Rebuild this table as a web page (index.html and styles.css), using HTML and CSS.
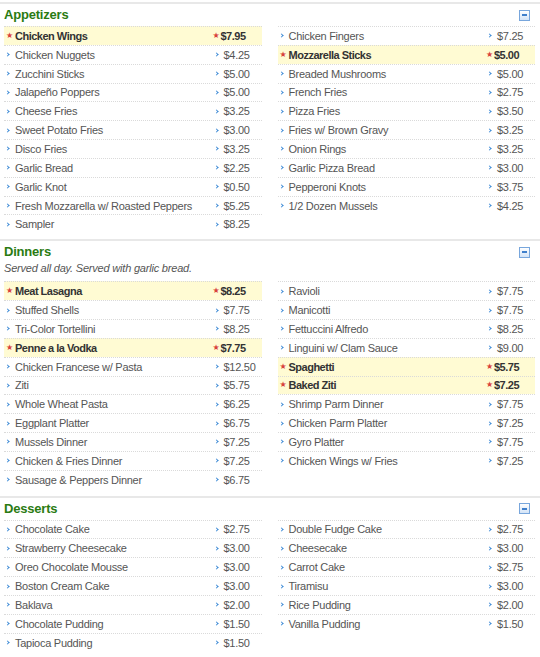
FILE: index.html
```html
<!DOCTYPE html>
<html>
<head>
<meta charset="utf-8">
<link rel="stylesheet" href="styles.css">
</head>
<body>
<div class="menu">
  <section class="section">
    <div class="sec-head"><h2>Appetizers</h2><span class="toggle"></span></div>
    <div class="cols">
      <ul class="col">
        <li class="row hot"><span class="name">Chicken Wings</span><span class="price">$7.95</span></li>
        <li class="row"><span class="name">Chicken Nuggets</span><span class="price">$4.25</span></li>
        <li class="row"><span class="name">Zucchini Sticks</span><span class="price">$5.00</span></li>
        <li class="row"><span class="name">Jalapeño Poppers</span><span class="price">$5.00</span></li>
        <li class="row"><span class="name">Cheese Fries</span><span class="price">$3.25</span></li>
        <li class="row"><span class="name">Sweet Potato Fries</span><span class="price">$3.00</span></li>
        <li class="row"><span class="name">Disco Fries</span><span class="price">$3.25</span></li>
        <li class="row"><span class="name">Garlic Bread</span><span class="price">$2.25</span></li>
        <li class="row"><span class="name">Garlic Knot</span><span class="price">$0.50</span></li>
        <li class="row"><span class="name">Fresh Mozzarella w/ Roasted Peppers</span><span class="price">$5.25</span></li>
        <li class="row"><span class="name">Sampler</span><span class="price">$8.25</span></li>
      </ul>
      <ul class="col">
        <li class="row"><span class="name">Chicken Fingers</span><span class="price">$7.25</span></li>
        <li class="row hot"><span class="name">Mozzarella Sticks</span><span class="price">$5.00</span></li>
        <li class="row"><span class="name">Breaded Mushrooms</span><span class="price">$5.00</span></li>
        <li class="row"><span class="name">French Fries</span><span class="price">$2.75</span></li>
        <li class="row"><span class="name">Pizza Fries</span><span class="price">$3.50</span></li>
        <li class="row"><span class="name">Fries w/ Brown Gravy</span><span class="price">$3.25</span></li>
        <li class="row"><span class="name">Onion Rings</span><span class="price">$3.25</span></li>
        <li class="row"><span class="name">Garlic Pizza Bread</span><span class="price">$3.00</span></li>
        <li class="row"><span class="name">Pepperoni Knots</span><span class="price">$3.75</span></li>
        <li class="row"><span class="name">1/2 Dozen Mussels</span><span class="price">$4.25</span></li>
      </ul>
    </div>
  </section>

  <section class="section section-loose">
    <div class="sec-head"><h2>Dinners</h2><span class="toggle"></span></div>
    <p class="desc">Served all day. Served with garlic bread.</p>
    <div class="cols">
      <ul class="col">
        <li class="row hot"><span class="name">Meat Lasagna</span><span class="price">$8.25</span></li>
        <li class="row"><span class="name">Stuffed Shells</span><span class="price">$7.75</span></li>
        <li class="row"><span class="name">Tri-Color Tortellini</span><span class="price">$8.25</span></li>
        <li class="row hot"><span class="name">Penne a la Vodka</span><span class="price">$7.75</span></li>
        <li class="row"><span class="name">Chicken Francese w/ Pasta</span><span class="price">$12.50</span></li>
        <li class="row"><span class="name">Ziti</span><span class="price">$5.75</span></li>
        <li class="row"><span class="name">Whole Wheat Pasta</span><span class="price">$6.25</span></li>
        <li class="row"><span class="name">Eggplant Platter</span><span class="price">$6.75</span></li>
        <li class="row"><span class="name">Mussels Dinner</span><span class="price">$7.25</span></li>
        <li class="row"><span class="name">Chicken &amp; Fries Dinner</span><span class="price">$7.25</span></li>
        <li class="row"><span class="name">Sausage &amp; Peppers Dinner</span><span class="price">$6.75</span></li>
      </ul>
      <ul class="col">
        <li class="row"><span class="name">Ravioli</span><span class="price">$7.75</span></li>
        <li class="row"><span class="name">Manicotti</span><span class="price">$7.75</span></li>
        <li class="row"><span class="name">Fettuccini Alfredo</span><span class="price">$8.25</span></li>
        <li class="row"><span class="name">Linguini w/ Clam Sauce</span><span class="price">$9.00</span></li>
        <li class="row hot"><span class="name">Spaghetti</span><span class="price">$5.75</span></li>
        <li class="row hot"><span class="name">Baked Ziti</span><span class="price">$7.25</span></li>
        <li class="row"><span class="name">Shrimp Parm Dinner</span><span class="price">$7.75</span></li>
        <li class="row"><span class="name">Chicken Parm Platter</span><span class="price">$7.25</span></li>
        <li class="row"><span class="name">Gyro Platter</span><span class="price">$7.75</span></li>
        <li class="row"><span class="name">Chicken Wings w/ Fries</span><span class="price">$7.25</span></li>
      </ul>
    </div>
  </section>

  <section class="section">
    <div class="sec-head"><h2>Desserts</h2><span class="toggle"></span></div>
    <div class="cols">
      <ul class="col">
        <li class="row"><span class="name">Chocolate Cake</span><span class="price">$2.75</span></li>
        <li class="row"><span class="name">Strawberry Cheesecake</span><span class="price">$3.00</span></li>
        <li class="row"><span class="name">Oreo Chocolate Mousse</span><span class="price">$3.00</span></li>
        <li class="row"><span class="name">Boston Cream Cake</span><span class="price">$3.00</span></li>
        <li class="row"><span class="name">Baklava</span><span class="price">$2.00</span></li>
        <li class="row"><span class="name">Chocolate Pudding</span><span class="price">$1.50</span></li>
        <li class="row"><span class="name">Tapioca Pudding</span><span class="price">$1.50</span></li>
      </ul>
      <ul class="col">
        <li class="row"><span class="name">Double Fudge Cake</span><span class="price">$2.75</span></li>
        <li class="row"><span class="name">Cheesecake</span><span class="price">$3.00</span></li>
        <li class="row"><span class="name">Carrot Cake</span><span class="price">$2.75</span></li>
        <li class="row"><span class="name">Tiramisu</span><span class="price">$3.00</span></li>
        <li class="row"><span class="name">Rice Pudding</span><span class="price">$2.00</span></li>
        <li class="row"><span class="name">Vanilla Pudding</span><span class="price">$1.50</span></li>
      </ul>
    </div>
  </section>
</div>
</body>
</html>
```

FILE: styles.css
```css
html, body {
  margin: 0;
  padding: 0;
  background: #fff;
}
body {
  padding-top: 2px;
  font-family: "Liberation Sans", Arial, sans-serif;
  font-size: 11px;
  color: #555;
}
.menu {
  width: 540px;
}
.section {
  border-top: 2px solid #e8e8e8;
  padding: 3px 5px 6px 4px;
}
.section-loose {
  padding-bottom: 7px;
}
.sec-head {
  display: flex;
  align-items: center;
  justify-content: space-between;
  height: 16px;
}
.sec-head h2 {
  margin: 0;
  font-size: 13px;
  line-height: 16px;
  font-weight: bold;
  letter-spacing: -0.2px;
  color: #2a7b12;
}
.toggle {
  width: 9px;
  height: 9px;
  margin-right: 5px;
  border: 1px solid #78a6dc;
  background: linear-gradient(#ffffff, #d2e3f7);
  display: flex;
  align-items: center;
  justify-content: center;
}
.toggle::before {
  content: "";
  width: 5px;
  height: 2px;
  background: #3f7fcb;
}
.desc {
  margin: 0 0 5px;
  line-height: 16px;
  font-size: 11px;
  font-style: italic;
  letter-spacing: -0.2px;
  color: #555;
}
.sec-head + .cols {
  margin-top: 3px;
}
.cols {
  display: grid;
  grid-template-columns: 1fr 1fr;
  column-gap: 16px;
}
.col {
  list-style: none;
  margin: 0;
  padding: 0;
}
.row {
  display: flex;
  align-items: center;
  height: 18.85px;
  box-sizing: border-box;
  border-top: 1px dotted #dadada;
  white-space: nowrap;
  letter-spacing: -0.27px;
}
.name {
  flex: 1;
  display: flex;
  align-items: center;
}
.price {
  width: 49px;
  display: flex;
  align-items: center;
}
.name::before,
.price::before {
  content: "";
  display: inline-block;
  width: 2px;
  height: 2px;
  border-top: 1px solid #3d8ad6;
  border-right: 1px solid #3d8ad6;
  transform: rotate(45deg);
  margin: 0 6px 0 2px;
  flex: none;
}
.hot {
  background: #fffbd3;
  color: #333;
  font-weight: bold;
  letter-spacing: -0.5px;
}
.hot .name::before,
.hot .price::before {
  content: "★";
  width: 8px;
  height: auto;
  border: 0;
  transform: none;
  margin: 0;
  font-family: "DejaVu Sans", sans-serif;
  font-size: 8px;
  font-weight: normal;
  letter-spacing: 0;
  color: #d8413c;
  line-height: 1;
}
.hot .name::before {
  margin-left: 2px;
  margin-right: 1px;
}
```
